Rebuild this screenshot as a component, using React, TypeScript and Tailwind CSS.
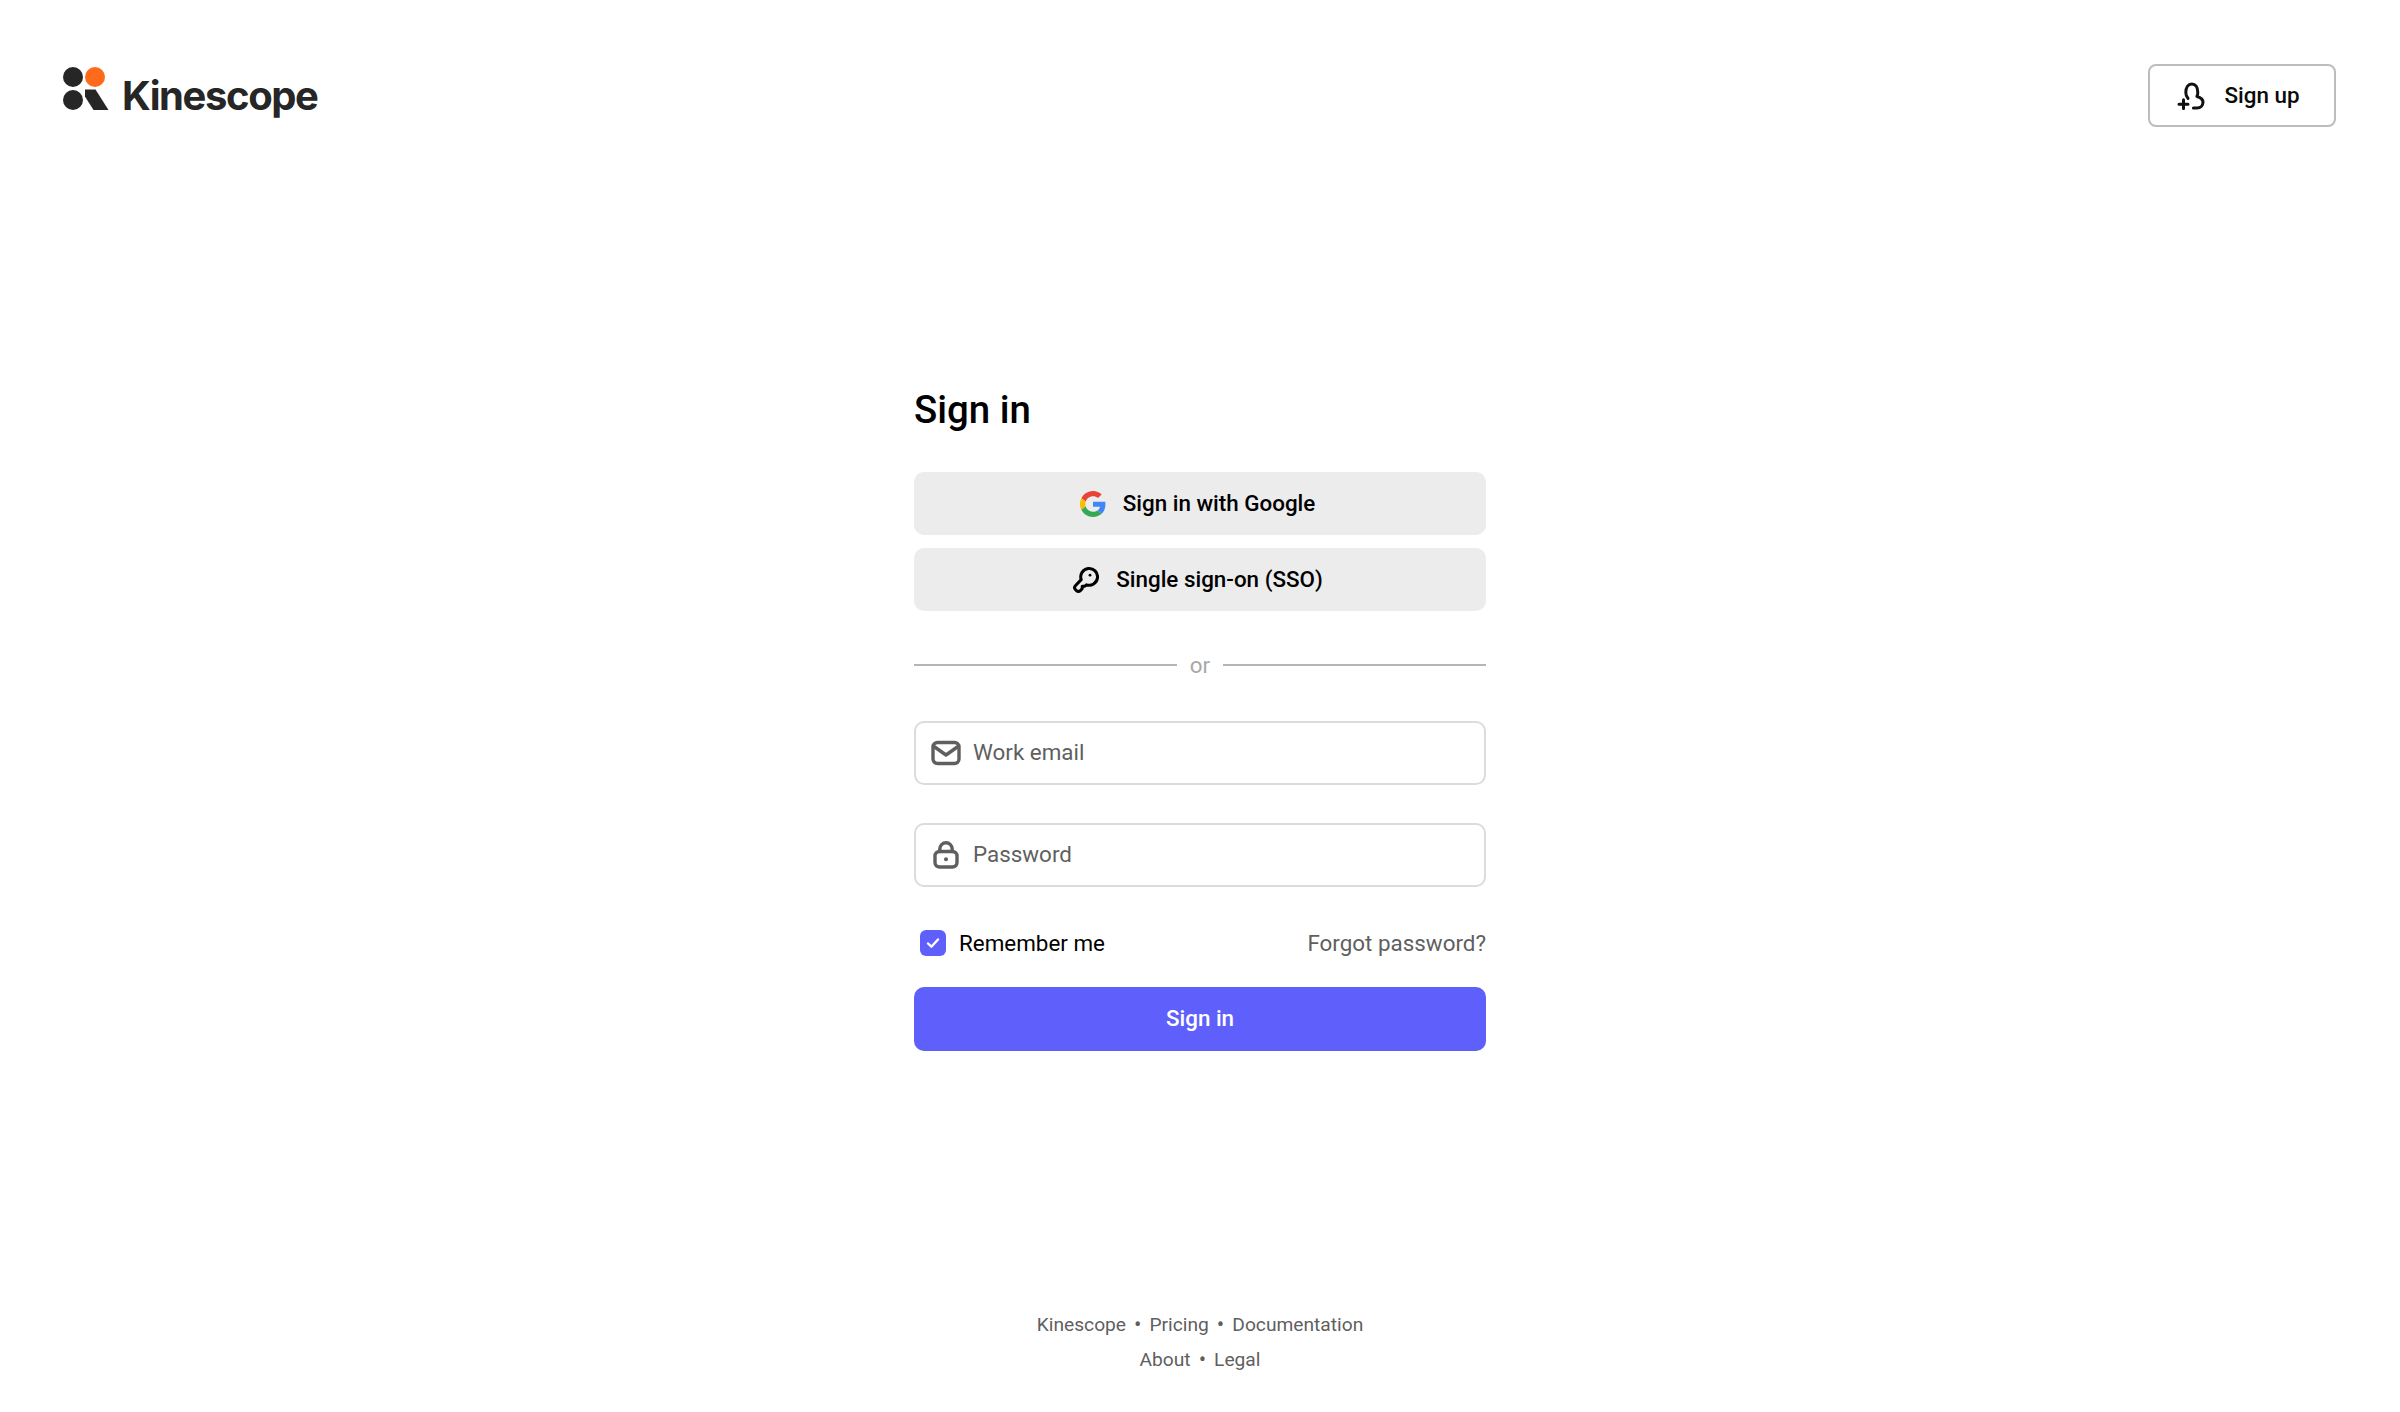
function Logo() {
  return (
    <div className="flex items-start">
      <svg width="46" height="44" viewBox="0 0 46 44" className="-mt-[5px] shrink-0">
        <circle cx="10" cy="10" r="10" fill="#262626" />
        <circle cx="32" cy="10" r="10" fill="#ff6b1a" />
        <circle cx="10" cy="33" r="10" fill="#262626" />
        <path d="M22 22.5h10.5L45.5 43H30.5L22 29.5z" fill="#262626" />
      </svg>
      <span className="ml-[13px] font-['Inter',sans-serif] text-[40px] leading-[48px] font-bold tracking-[-0.035em] text-[#262626]">
        Kinescope
      </span>
    </div>
  );
}

function GoogleIcon() {
  return (
    <svg width="26" height="26" viewBox="0 0 48 48" className="shrink-0">
      <path fill="#EA4335" d="M24 9.5c3.54 0 6.71 1.22 9.21 3.6l6.85-6.85C35.9 2.38 30.47 0 24 0 14.62 0 6.51 5.38 2.56 13.22l7.98 6.19C12.43 13.72 17.74 9.5 24 9.5z" />
      <path fill="#4285F4" d="M46.98 24.55c0-1.57-.15-3.09-.38-4.55H24v9.02h12.94c-.58 2.96-2.26 5.48-4.78 7.18l7.73 6c4.51-4.18 7.09-10.36 7.09-17.65z" />
      <path fill="#FBBC05" d="M10.53 28.59c-.48-1.45-.76-2.99-.76-4.59s.27-3.14.76-4.59l-7.98-6.19C.92 16.46 0 20.12 0 24c0 3.88.92 7.54 2.56 10.78l7.97-6.19z" />
      <path fill="#34A853" d="M24 48c6.48 0 11.93-2.13 15.89-5.81l-7.73-6c-2.15 1.45-4.92 2.3-8.16 2.3-6.26 0-11.57-4.22-13.47-9.91l-7.98 6.19C6.51 42.62 14.62 48 24 48z" />
    </svg>
  );
}

function KeyIcon() {
  return (
    <svg width="28" height="28" viewBox="0 0 28 28" fill="none" stroke="#000" strokeWidth="3" strokeLinecap="round" strokeLinejoin="round" className="shrink-0">
      <path d="M10.2 13.6a8.4 8.4 0 1 1 5.2 5.2l-1.5 1.4h-2.7v2.6l-1.6 1.6a3.2 3.2 0 0 1-4.4 0l-.6-.6a3.1 3.1 0 0 1 0-4.3z" />
      <circle cx="19" cy="9.2" r="1.4" fill="#000" stroke="none" />
    </svg>
  );
}

function SignUpIcon() {
  return (
    <svg width="28" height="28" viewBox="0 0 28 28" fill="none" stroke="#111" strokeWidth="3" strokeLinecap="round" strokeLinejoin="round" className="shrink-0">
      <path d="M11 16.4c-1.4-1.4-2.2-3.4-2.2-5.8C8.8 5.2 11.2 2 14.8 2s6 3.2 6 8.4c0 1.4-.3 2.9-.9 4.1 3.4.9 6.1 2.8 6.1 5.8 0 3.3-2.6 5.7-6 5.7h-3.6" />
      <path d="M2 22.2h9M6.5 17.8v8.8" />
    </svg>
  );
}

function MailIcon() {
  return (
    <svg width="30" height="26" viewBox="0 0 30 26" fill="none" stroke="#5f5f5f" strokeWidth="3.4" strokeLinecap="round" strokeLinejoin="round" className="shrink-0">
      <rect x="2" y="2.5" width="26" height="21" rx="4.5" />
      <path d="M3 6.5l12 8.5 12-8.5" />
    </svg>
  );
}

function LockIcon() {
  return (
    <svg width="30" height="28" viewBox="0 0 30 28" fill="none" stroke="#5f5f5f" strokeWidth="3.4" strokeLinecap="round" strokeLinejoin="round" className="shrink-0">
      <rect x="4" y="10.5" width="22" height="15.5" rx="4.5" />
      <path d="M8.8 10.5V8a6.2 6.2 0 0 1 12.4 0v2.5" />
      <circle cx="15" cy="18.2" r="2" fill="#5f5f5f" stroke="none" />
    </svg>
  );
}

function Separator() {
  return <span className="mx-[8px] text-[22px]">•</span>;
}

export default function App() {
  return (
    <div className="flex min-h-[1412px] flex-col bg-white font-['Roboto',sans-serif]">
      <header className="flex items-center justify-between pt-[64px] pr-[64px] pl-[63px]">
        <Logo />
        <a className="flex h-[63px] w-[188px] items-center justify-center gap-[19px] rounded-[8px] border-2 border-[#bdbdbd] pr-[7px] text-[22.4px] font-medium text-[#0a0a0a]">
          <SignUpIcon />
          Sign up
        </a>
      </header>

      <main className="mt-[55px] flex flex-1 justify-center">
        <div className="flex w-[572px] flex-col">
          <h1 className="mt-[203px] text-[38.4px] leading-[50px] font-medium text-black">Sign in</h1>

          <button className="mt-[37px] flex h-[63px] items-center justify-center gap-[17px] rounded-[10px] bg-[#ececec] pr-[5px] text-[22.4px] font-medium text-black">
            <GoogleIcon />
            Sign in with Google
          </button>
          <button className="mt-[13px] flex h-[63px] items-center justify-center gap-[17px] rounded-[10px] bg-[#ececec] pr-[6px] text-[22.4px] font-medium text-black">
            <KeyIcon />
            Single sign-on (SSO)
          </button>

          <div className="mt-[39px] flex items-center gap-[13px] text-[22.4px] leading-[30px] text-[#a8a8a8]">
            <div className="h-[2px] flex-1 bg-[#b5b5b5]" />
            or
            <div className="h-[2px] flex-1 bg-[#b5b5b5]" />
          </div>

          <label className="mt-[41px] flex h-[64px] items-center gap-[12px] rounded-[10px] border-2 border-[#dcdcdc] pl-[15px]">
            <MailIcon />
            <input placeholder="Work email" className="w-full bg-transparent text-[22.4px] outline-none placeholder:text-[#5f5f5f]" />
          </label>
          <label className="mt-[38px] flex h-[64px] items-center gap-[12px] rounded-[10px] border-2 border-[#dcdcdc] pl-[15px]">
            <LockIcon />
            <input placeholder="Password" type="password" className="w-full bg-transparent text-[22.4px] outline-none placeholder:text-[#5f5f5f]" />
          </label>

          <div className="mt-[42px] flex items-center justify-between text-[22.4px] leading-[28px]">
            <label className="flex items-center gap-[13px] pl-[6px] text-black">
              <span className="flex h-[26px] w-[26px] items-center justify-center rounded-[6px] bg-[#5f5ffb]">
                <svg width="14" height="12" viewBox="0 0 14 12" fill="none" stroke="#fff" strokeWidth="2.4" strokeLinecap="round" strokeLinejoin="round">
                  <path d="M2 6.5l3.4 3.2L12 2.5" />
                </svg>
              </span>
              Remember me
            </label>
            <a className="text-[#5f5f5f]">Forgot password?</a>
          </div>

          <button className="mt-[30px] h-[64px] rounded-[10px] bg-[#5f5ffb] text-[22.4px] font-medium text-white">
            Sign in
          </button>
        </div>
      </main>

      <footer className="flex flex-col items-center pb-[35px] text-[19.2px] leading-[35px] text-[#5f5f5f]">
        <div className="flex items-center">
          Kinescope
          <Separator />
          Pricing
          <Separator />
          Documentation
        </div>
        <div className="flex items-center">
          About
          <Separator />
          Legal
        </div>
      </footer>
    </div>
  );
}
